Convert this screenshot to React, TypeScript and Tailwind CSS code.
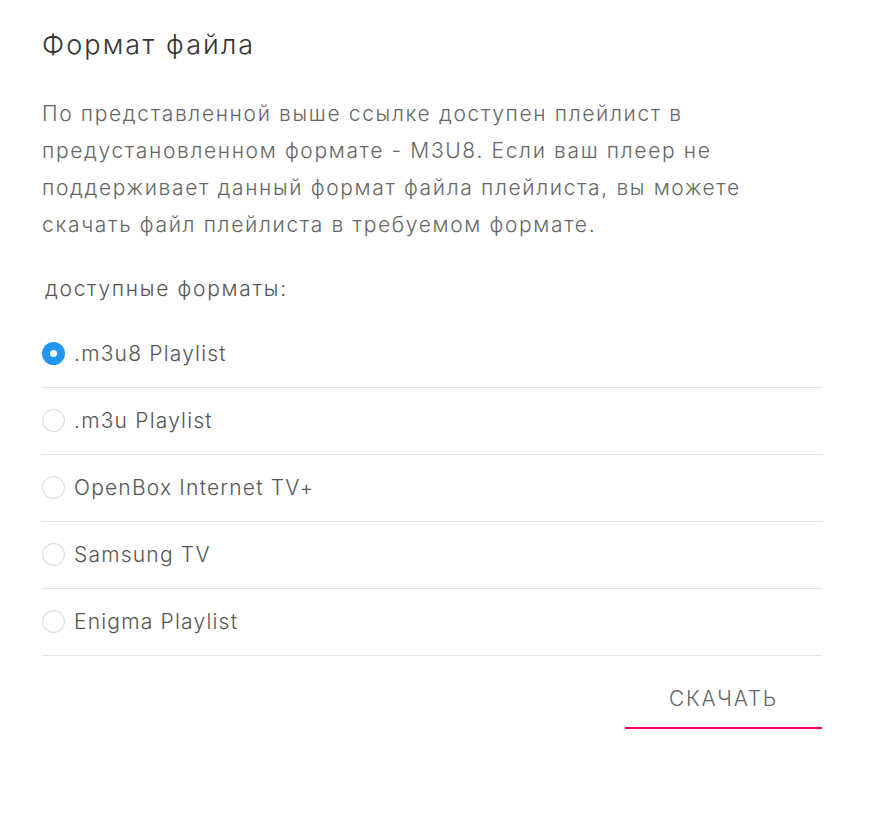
import React, { useState } from "react";

const formats = [".m3u8 Playlist", ".m3u Playlist", "OpenBox Internet TV+", "Samsung TV", "Enigma Playlist"];

export default function App() {
  const [sel, setSel] = useState(0);
  return (
    <div className="min-h-[826px] w-[890px] bg-white px-[42px] pt-[29px] font-['Inter',sans-serif] font-light">
      <h2 className="text-[27px] leading-[32px] font-light tracking-[2.1px] text-[#333]">Формат файла</h2>
      <p className="mt-[34px] w-[780px] text-[21px] leading-[37px] tracking-[1.65px] text-[#666]">
        По представленной выше ссылке доступен плейлист в предустановленном формате - M3U8. Если ваш плеер не поддерживает данный формат файла плейлиста, вы можете скачать файл плейлиста в требуемом формате.
      </p>
      <div className="mt-[31px] pl-[3px] text-[21px] leading-[30px] tracking-[1.7px] text-[#555]">доступные форматы:</div>
      <div className="mt-[17px] w-[780px]">
        {formats.map((f, i) => (
          <label
            key={f}
            onClick={() => setSel(i)}
            className="flex h-[67px] cursor-pointer items-center gap-[9px] border-b border-[#e5e5e5] pb-px"
          >
            {sel === i ? (
              <span className="flex h-[23px] w-[23px] items-center justify-center rounded-full bg-[#2196f3]">
                <span className="h-[7px] w-[7px] rounded-full bg-white" />
              </span>
            ) : (
              <span className="h-[23px] w-[23px] rounded-full border border-[#d4d4d4] bg-white" />
            )}
            <span className="text-[21px] leading-[30px] tracking-[1.2px] text-[#555]">{f}</span>
          </label>
        ))}
      </div>
      <div className="flex w-[780px] justify-end">
        <button className="w-[197px] border-b-2 border-[#ff0066] pt-[28px] pb-[13px] text-[21px] leading-[30px] tracking-[1.7px] text-[#666] font-light">
          СКАЧАТЬ
        </button>
      </div>
    </div>
  );
}
